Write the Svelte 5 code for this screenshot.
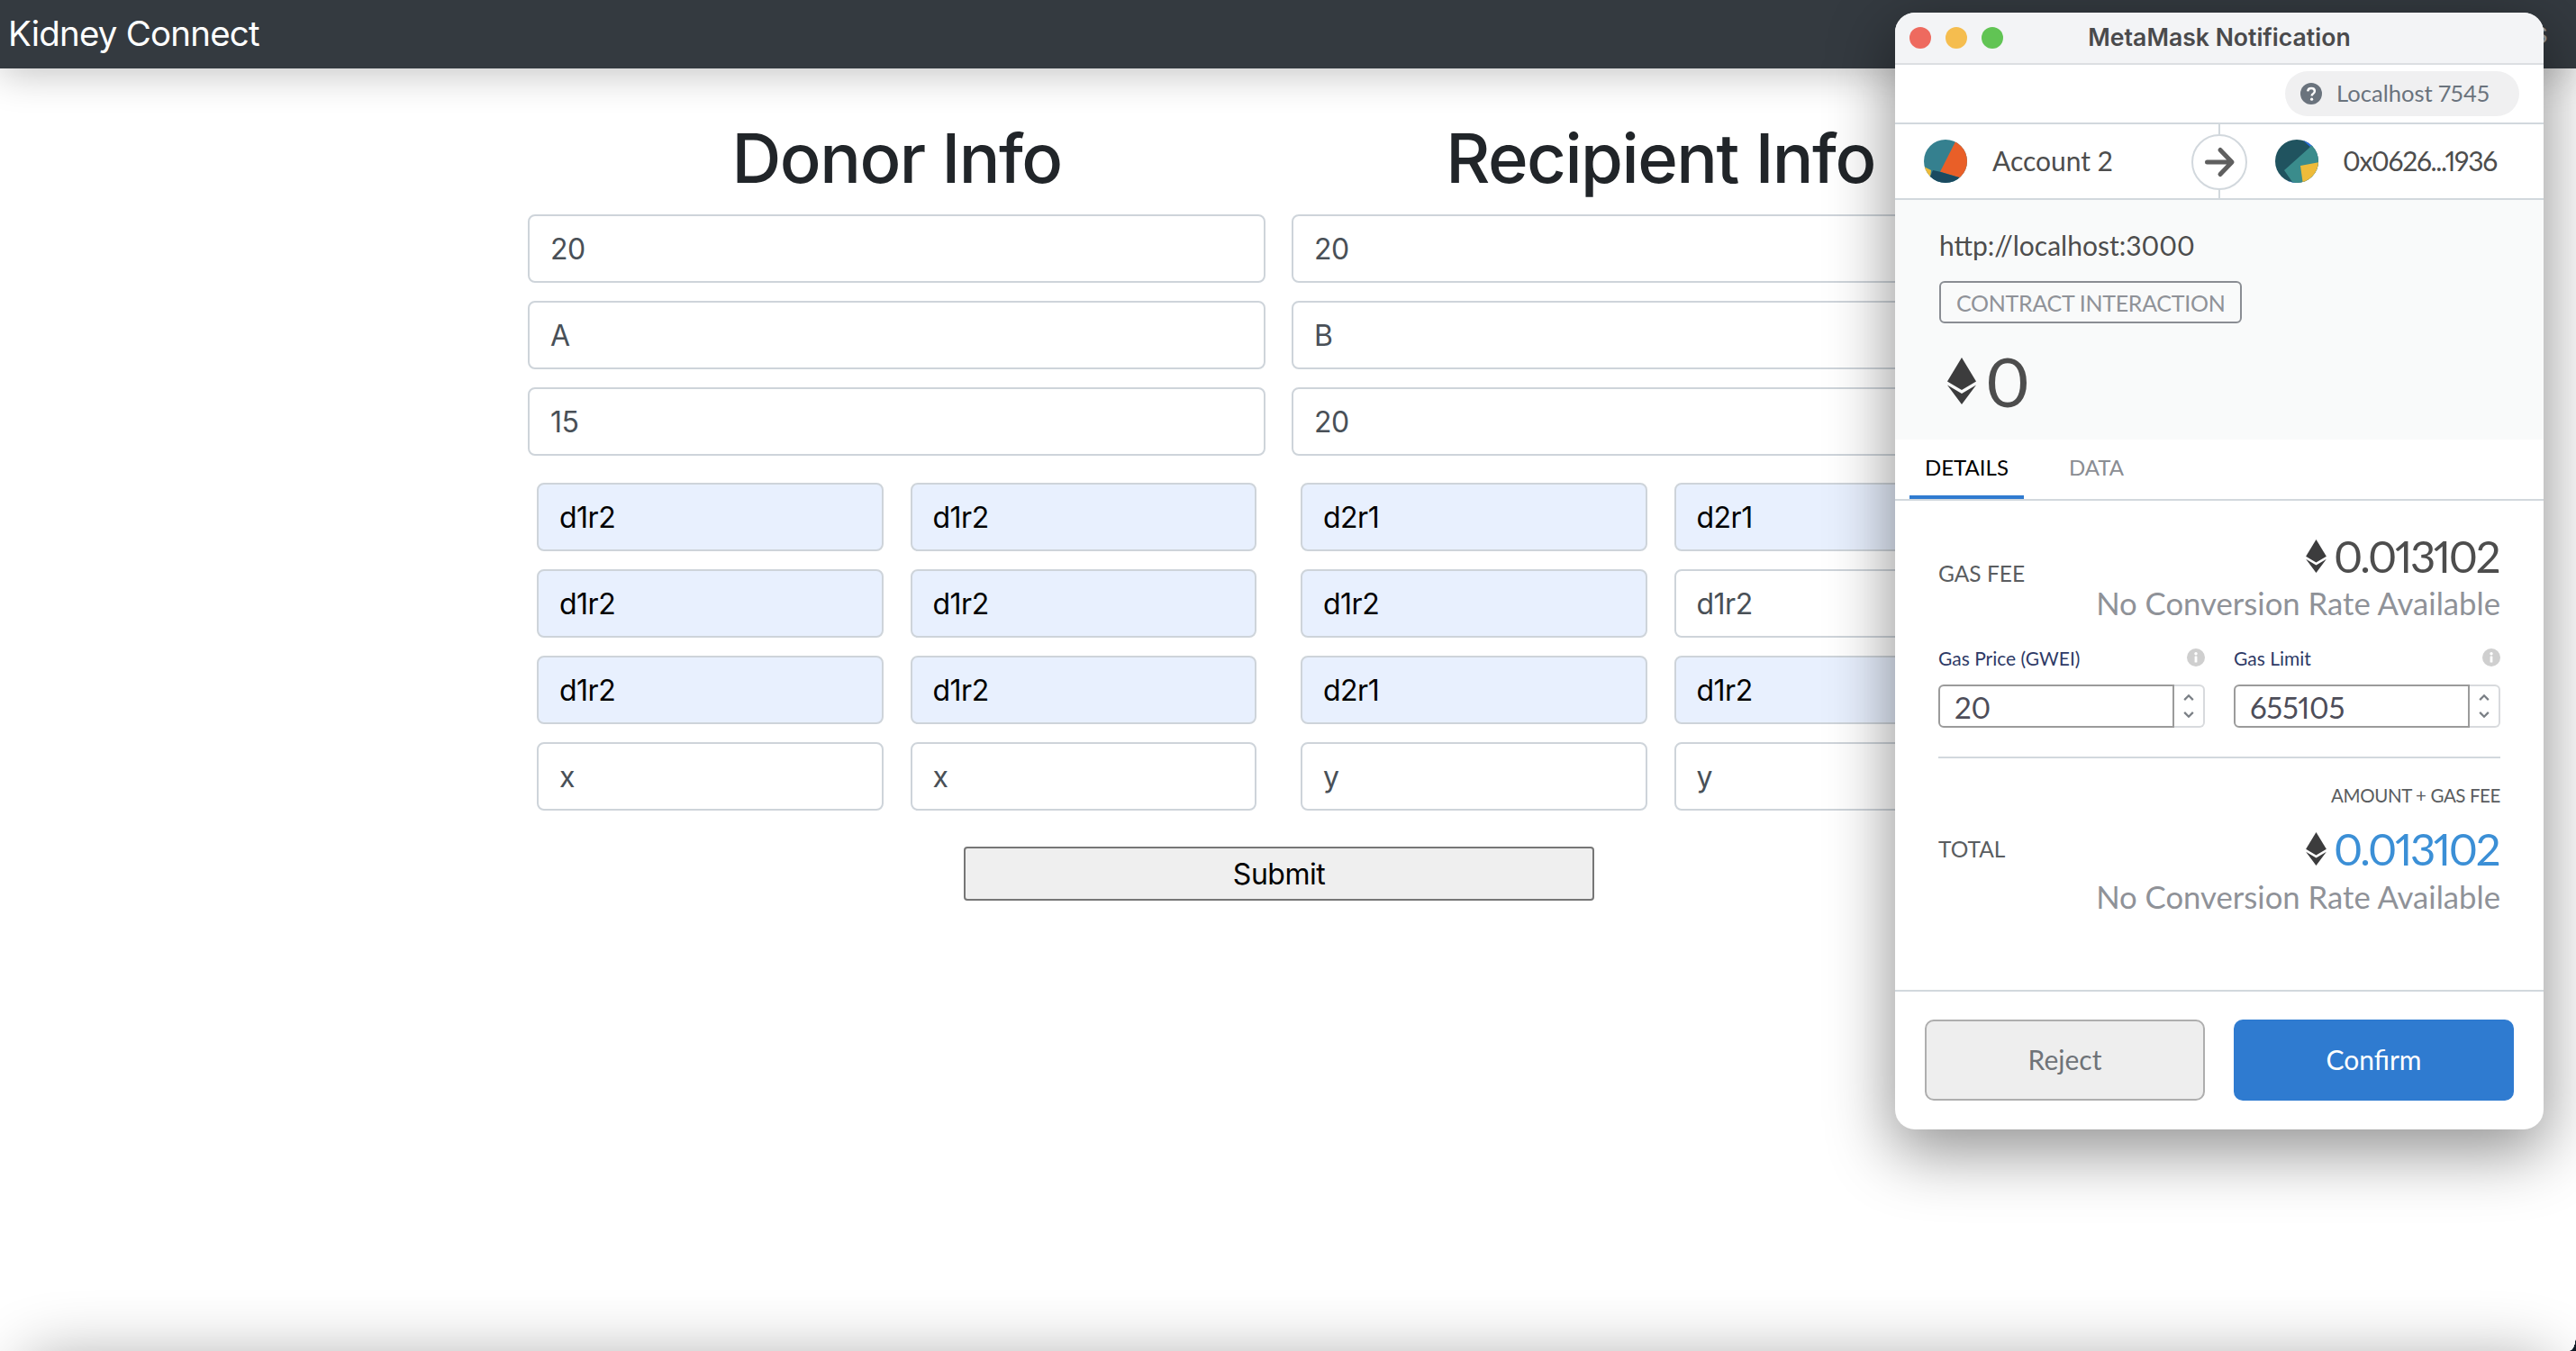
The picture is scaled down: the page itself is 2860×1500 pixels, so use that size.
<script>
  const donor = ['20', 'A', '15'];
  const recipient = ['20', 'B', '20'];
  const donorGrid = [
    ['d1r2', true], ['d1r2', true], ['d1r2', true], ['d1r2', true], ['d1r2', true], ['d1r2', true], ['x', false], ['x', false]
  ];
  const recipientGrid = [
    ['d2r1', true], ['d2r1', true], ['d1r2', true], ['d1r2', false], ['d2r1', true], ['d1r2', true], ['y', false], ['y', false]
  ];
  const columns = [
    { title: 'Donor Info', fields: donor, grid: donorGrid },
    { title: 'Recipient Info', fields: recipient, grid: recipientGrid }
  ];
</script>

{#snippet eth(cls)}
  <svg class={cls} viewBox="0 0 32 52" aria-hidden="true">
    <path d="M16 0 32 26.500 16 36 0 26.500Z" fill="#3c3c3d" />
    <path d="M0 30.500 16 40 32 30.500 16 52Z" fill="#3c3c3d" />
  </svg>
{/snippet}

{#snippet info()}
  <svg class="info" viewBox="0 0 20 20" aria-hidden="true">
    <circle cx="10" cy="10" r="10" fill="#cfcfcf" />
    <rect x="8.600" y="8.500" width="2.800" height="7" rx="0.500" fill="#fff" />
    <circle cx="10" cy="5.800" r="1.700" fill="#fff" />
  </svg>
{/snippet}

{#snippet stepper()}
  <div class="stepper">
    <svg viewBox="0 0 16 10" aria-hidden="true"><path d="M2.500 8 8 2.500 13.500 8" /></svg>
    <svg viewBox="0 0 16 10" aria-hidden="true"><path d="M2.500 2 8 7.500 13.500 2" /></svg>
  </div>
{/snippet}

<div class="screen">
  <nav class="navbar">
    <span class="brand">Kidney Connect</span>
    <span class="nav-right">s</span>
  </nav>

  <main class="form">
    <div class="cols">
      {#each columns as col}
        <section class="col">
          <h1>{col.title}</h1>
          {#each col.fields as f}
            <div class="field">{f}</div>
          {/each}
          <div class="grid">
            {#each col.grid as [text, filled]}
              <div class="field" class:filled>{text}</div>
            {/each}
          </div>
        </section>
      {/each}
    </div>
    <button class="submit" type="button">Submit</button>
  </main>

  <div class="under-shadow"></div>
  <div class="desk-corner"></div>

  <aside class="popup">
    <header class="titlebar">
      <div class="lights"><i class="red"></i><i class="yellow"></i><i class="green"></i></div>
      <span class="wintitle">MetaMask Notification</span>
    </header>

    <div class="network">
      <div class="pill">
        <svg class="help" viewBox="0 0 24 24" aria-hidden="true">
          <circle cx="12" cy="12" r="12" fill="#6a737d" />
          <path d="M8.200 9.300C8.400 7.200 10 6 12.100 6c2.200 0 3.800 1.300 3.800 3.200 0 1.500-.8 2.300-1.900 3-1 .6-1.300 1-1.300 2v.4" fill="none" stroke="#fff" stroke-width="2.400" />
          <circle cx="12.600" cy="18.200" r="1.600" fill="#fff" />
        </svg>
        <span>Localhost 7545</span>
      </div>
    </div>

    <div class="accounts">
      <div class="acct left">
        <svg class="avatar" viewBox="0 0 48 48" aria-hidden="true">
          <defs><clipPath id="av1"><circle cx="24" cy="24" r="24" /></clipPath></defs>
          <g clip-path="url(#av1)">
            <rect width="48" height="48" fill="#35808f" />
            <path d="M35 2.300 18 35.700 40 42.300 60 30V0Z" fill="#e95f28" />
            <path d="M0 30 8 34 7 42 0 48Z" fill="#eebb3a" />
            <path d="M10 34 18 35.700 40 42.300 40 60H0L7 41Z" fill="#1a4a60" />
          </g>
        </svg>
        <span>Account 2</span>
      </div>
      <div class="arrow-wrap">
        <svg viewBox="0 0 62 62" aria-hidden="true">
          <circle cx="31" cy="31" r="30" fill="#fff" stroke="#d2d8dd" stroke-width="2" />
          <path d="M17.500 31H44.500M32 17.500 45 31 32 44.500" fill="none" stroke="#5f5f5f" stroke-width="5" stroke-linecap="round" stroke-linejoin="round" />
        </svg>
      </div>
      <div class="acct right">
        <svg class="avatar" viewBox="0 0 48 48" aria-hidden="true">
          <defs><clipPath id="av2"><circle cx="24" cy="24" r="24" /></clipPath></defs>
          <g clip-path="url(#av2)">
            <rect width="48" height="48" fill="#20535f" />
            <path d="M30 0 40 9 60 0V-2H30Z" fill="#2c6fe0" />
            <path d="M38 9 10 34 19 47 19 60H60V10L42 4Z" fill="#3a8c8c" />
            <path d="M15 46 22 48H13Z" fill="#2c6fe0" />
            <path d="M28 29 50 25 50 50 31 50Z" fill="#eebb3a" />
          </g>
        </svg>
        <span class="address">0x0626...1936</span>
      </div>
    </div>

    <div class="summary">
      <div class="origin">http://localhost:3000</div>
      <div class="badge">CONTRACT INTERACTION</div>
      <div class="amount">{@render eth('eth-big')}<span>0</span></div>
    </div>

    <div class="tabs">
      <div class="tab active">DETAILS</div>
      <div class="tab">DATA</div>
    </div>

    <div class="details">
      <div class="fee-row gas">
        <div class="fee-label">GAS FEE</div>
        <div class="fee-values">
          <div class="fee-main">{@render eth('eth-small')}<span>0.013102</span></div>
          <div class="fee-sub">No Conversion Rate Available</div>
        </div>
      </div>

      <div class="gas-inputs">
        <div class="gas-col">
          <div class="gas-label"><span>Gas Price (GWEI)</span>{@render info()}</div>
          <div class="gas-input"><div class="num">20</div>{@render stepper()}</div>
        </div>
        <div class="gas-col">
          <div class="gas-label"><span>Gas Limit</span>{@render info()}</div>
          <div class="gas-input"><div class="num">655105</div>{@render stepper()}</div>
        </div>
      </div>

      <div class="divider"></div>

      <div class="heading">AMOUNT + GAS FEE</div>
      <div class="fee-row total">
        <div class="fee-label">TOTAL</div>
        <div class="fee-values">
          <div class="fee-main blue">{@render eth('eth-small')}<span>0.013102</span></div>
          <div class="fee-sub">No Conversion Rate Available</div>
        </div>
      </div>
    </div>

    <footer class="actions">
      <button class="reject" type="button">Reject</button>
      <button class="confirm" type="button">Confirm</button>
    </footer>
  </aside>
</div>

<style>
  :global(body) {
    margin: 0;
    background: #fff;
  }

  .screen {
    position: relative;
    width: 2860px;
    height: 1500px;
    overflow: hidden;
    background: #fff;
    font-family: Inter, "Liberation Sans", sans-serif;
  }

  .navbar {
    position: relative;
    height: 76px;
    box-sizing: border-box;
    background: #343a40;
    display: flex;
    align-items: center;
    justify-content: space-between;
    padding: 0 31px 3px 9px;
    box-shadow: 0 6px 44px rgba(0, 0, 0, 0.24);
  }

  .brand {
    color: #fff;
    font-size: 38.5px;
    letter-spacing: -0.8px;
  }

  .nav-right {
    color: rgba(255, 255, 255, 0.5);
    font-size: 32px;
  }

  .form {
    width: 1698px;
    margin-left: 571px;
  }

  .cols {
    display: flex;
    gap: 0;
  }

  .col {
    flex: none;
    width: 849px;
    box-sizing: border-box;
    padding: 53px 15px 0;
    display: flex;
    flex-direction: column;
    gap: 20px;
  }

  .col + .col {
    margin-left: -1px;
  }

  h1 {
    margin: -2px 0 -5px;
    height: 96px;
    line-height: 96px;
    text-align: center;
    font-size: 76px;
    font-weight: 500;
    letter-spacing: -1.5px;
    color: #212529;
  }

  .field {
    height: 76px;
    box-sizing: border-box;
    border: 2px solid #ced4da;
    border-radius: 8px;
    background: #fff;
    padding: 0 23px;
    display: flex;
    align-items: center;
    font-size: 32px;
    letter-spacing: -0.5px;
    color: #495057;
  }

  .field.filled {
    background: #e8f0fe;
    color: #000;
  }

  .grid {
    display: grid;
    grid-template-columns: 1fr 1fr;
    gap: 20px 30px;
    padding: 10px 10px 0;
  }

  .submit {
    display: block;
    width: 700px;
    height: 60px;
    margin: 40px auto 0;
    box-sizing: border-box;
    border: 2px solid #767676;
    border-radius: 4px;
    background: #efefef;
    font: 32px Inter, "Liberation Sans", sans-serif;
    letter-spacing: -0.5px;
    color: #000;
  }

  .under-shadow {
    position: absolute;
    left: 24px;
    right: 24px;
    top: 1506px;
    height: 100px;
    border-radius: 30px;
    box-shadow: 0 0 70px rgba(0, 0, 0, 0.32);
  }

  .desk-corner {
    position: absolute;
    right: 0;
    bottom: 0;
    width: 7px;
    height: 17px;
    background: radial-gradient(ellipse 7px 17px at 0 0, transparent 96%, #0d1a24 100%);
  }

  .popup {
    position: absolute;
    left: 2104px;
    top: 14px;
    width: 720px;
    height: 1240px;
    border-radius: 22px;
    background: #fff;
    overflow: hidden;
    display: flex;
    flex-direction: column;
    box-shadow: 0 22px 70px 4px rgba(0, 0, 0, 0.42);
    font-family: Lato, sans-serif;
    font-variant-numeric: proportional-nums;
    color: #4d4d4d;
  }

  .titlebar {
    position: relative;
    height: 58px;
    flex: none;
    box-sizing: border-box;
    padding-bottom: 2px;
    background: #f3f4f6;
    border-bottom: 2px solid #dcdfe2;
    display: flex;
    align-items: center;
    justify-content: center;
  }

  .lights {
    position: absolute;
    left: 16px;
    top: 16px;
    display: flex;
    gap: 16px;
  }

  .lights i {
    display: block;
    width: 24px;
    height: 24px;
    border-radius: 50%;
  }

  .red { background: #ee6a5f; }
  .yellow { background: #f5bd4f; }
  .green { background: #61c454; }

  .wintitle {
    font-family: Inter, sans-serif;
    font-weight: 600;
    font-size: 26.6px;
    color: #4a4a4c;
  }

  .network {
    height: 66px;
    flex: none;
    box-sizing: border-box;
    border-bottom: 2px solid #d2d8dd;
    display: flex;
    justify-content: flex-end;
    align-items: center;
    padding-right: 27px;
  }

  .pill {
    width: 260px;
    height: 50px;
    box-sizing: border-box;
    padding-left: 17px;
    border-radius: 25px;
    background: #f0f0f1;
    display: flex;
    align-items: center;
    gap: 16px;
    font-size: 25.6px;
    color: #6a737d;
  }

  .pill span {
    margin-top: -2px;
  }

  .help {
    width: 24px;
    height: 24px;
  }

  .accounts {
    position: relative;
    height: 84px;
    flex: none;
    box-sizing: border-box;
    border-bottom: 2px solid #d2d8dd;
    display: flex;
  }

  .accounts::before {
    content: "";
    position: absolute;
    left: 359px;
    top: 0;
    bottom: 0;
    width: 2px;
    background: #d2d8dd;
  }

  .acct {
    width: 360px;
    box-sizing: border-box;
    display: flex;
    align-items: center;
    gap: 28px;
    font-size: 30px;
    color: #4d4d4d;
  }

  .acct span {
    margin-top: -2px;
  }

  .address {
    letter-spacing: -1.3px;
  }

  .acct.left {
    padding-left: 32px;
  }

  .acct.right {
    padding-left: 62px;
    gap: 27px;
  }

  .avatar {
    width: 48px;
    height: 48px;
  }

  .arrow-wrap {
    position: absolute;
    left: 329px;
    top: 11px;
    width: 62px;
    height: 62px;
  }

  .arrow-wrap svg {
    display: block;
    width: 62px;
    height: 62px;
  }

  .summary {
    height: 266px;
    flex: none;
    box-sizing: border-box;
    background: #f9fafa;
    padding: 30px 0 0 49px;
  }

  .origin {
    height: 40px;
    line-height: 40px;
    font-size: 30px;
    color: #4d4d4d;
  }

  .badge {
    width: fit-content;
    height: 47px;
    box-sizing: border-box;
    margin-top: 20px;
    padding: 0 17px;
    border: 2px solid #8a8d93;
    border-radius: 6px;
    display: flex;
    align-items: center;
    font-size: 25px;
    letter-spacing: -0.3px;
    color: #8f9298;
  }

  .amount {
    margin-top: 29px;
    display: flex;
    align-items: center;
    gap: 10px;
    padding-left: 9px;
    font-size: 76px;
    line-height: 70px;
    color: #4d4d4d;
  }

  .eth-big {
    width: 32px;
    height: 52px;
  }

  .tabs {
    height: 68px;
    flex: none;
    box-sizing: border-box;
    border-bottom: 2px solid #d2d8dd;
    display: flex;
    padding-left: 16px;
    gap: 33px;
  }

  .tab {
    height: 66px;
    box-sizing: border-box;
    padding: 0 17px 6px;
    display: flex;
    align-items: center;
    font-size: 24px;
    color: #8a8d93;
  }

  .tab.active {
    color: #000;
    border-bottom: 4px solid #2f7bd0;
    padding-bottom: 2px;
  }

  .details {
    flex: 1;
    padding: 0 48px;
  }

  .fee-row {
    display: flex;
    justify-content: space-between;
    align-items: flex-start;
  }

  .fee-row.gas {
    margin-top: 35px;
    height: 106px;
  }

  .fee-row.total {
    margin-top: 21px;
  }

  .fee-label {
    height: 32px;
    line-height: 32px;
    font-size: 24.5px;
    color: #5a5d60;
  }

  .gas .fee-label {
    margin-top: 30px;
  }

  .total .fee-label {
    margin-top: 11px;
  }

  .total .fee-sub {
    margin-top: 1px;
  }

  .fee-values {
    display: flex;
    flex-direction: column;
    align-items: flex-end;
  }

  .fee-main {
    height: 52px;
    display: flex;
    align-items: center;
    gap: 8px;
    margin-right: 2px;
    font-size: 49px;
    letter-spacing: -2.4px;
    color: #4d4d4d;
  }

  .fee-main.blue {
    color: #3b8fd6;
  }

  .eth-small {
    width: 23px;
    height: 37px;
  }

  .fee-sub {
    height: 54px;
    line-height: 54px;
    font-size: 34.7px;
    color: #8f9298;
  }

  .gas-inputs {
    display: flex;
    gap: 32px;
    margin-top: 18px;
  }

  .gas-col {
    width: 296px;
  }

  .gas-label {
    height: 30px;
    display: flex;
    justify-content: space-between;
    align-items: center;
    font-size: 21px;
    color: #2e3a66;
  }

  .info {
    width: 20px;
    height: 20px;
  }

  .gas-input {
    margin-top: 15px;
    height: 48px;
    display: flex;
  }

  .num {
    flex: 1;
    box-sizing: border-box;
    border: 2px solid #9b9b9b;
    border-radius: 6px 0 0 6px;
    padding: 2px 0 0 16px;
    display: flex;
    align-items: center;
    font-size: 33px;
    letter-spacing: -0.3px;
    color: #4d4d59;
  }

  .stepper {
    width: 34px;
    box-sizing: border-box;
    border: 2px solid #d8dadd;
    border-left: none;
    border-radius: 0 6px 6px 0;
    display: flex;
    flex-direction: column;
    align-items: center;
    justify-content: center;
    gap: 10px;
  }

  .stepper svg {
    width: 14px;
    height: 9px;
    fill: none;
    stroke: #7a7f85;
    stroke-width: 2.600;
  }

  .divider {
    height: 2px;
    margin-top: 32px;
    background: #d2d8dd;
  }

  .heading {
    margin-top: 29px;
    height: 24px;
    line-height: 24px;
    text-align: right;
    font-size: 20.5px;
    letter-spacing: -0.4px;
    color: #5a5d60;
  }

  .actions {
    height: 155px;
    flex: none;
    box-sizing: border-box;
    border-top: 2px solid #d2d8dd;
    padding: 31px 33px 0;
    display: flex;
    gap: 32px;
  }

  .actions button {
    width: 311px;
    height: 90px;
    box-sizing: border-box;
    padding-bottom: 4px;
    border-radius: 10px;
    font: 30px Lato, sans-serif;
  }

  .reject {
    background: #eeeeee;
    border: 2px solid #aeaeae;
    color: #6f7378;
  }

  .confirm {
    background: #2f7bd0;
    border: none;
    color: #fff;
  }
</style>
